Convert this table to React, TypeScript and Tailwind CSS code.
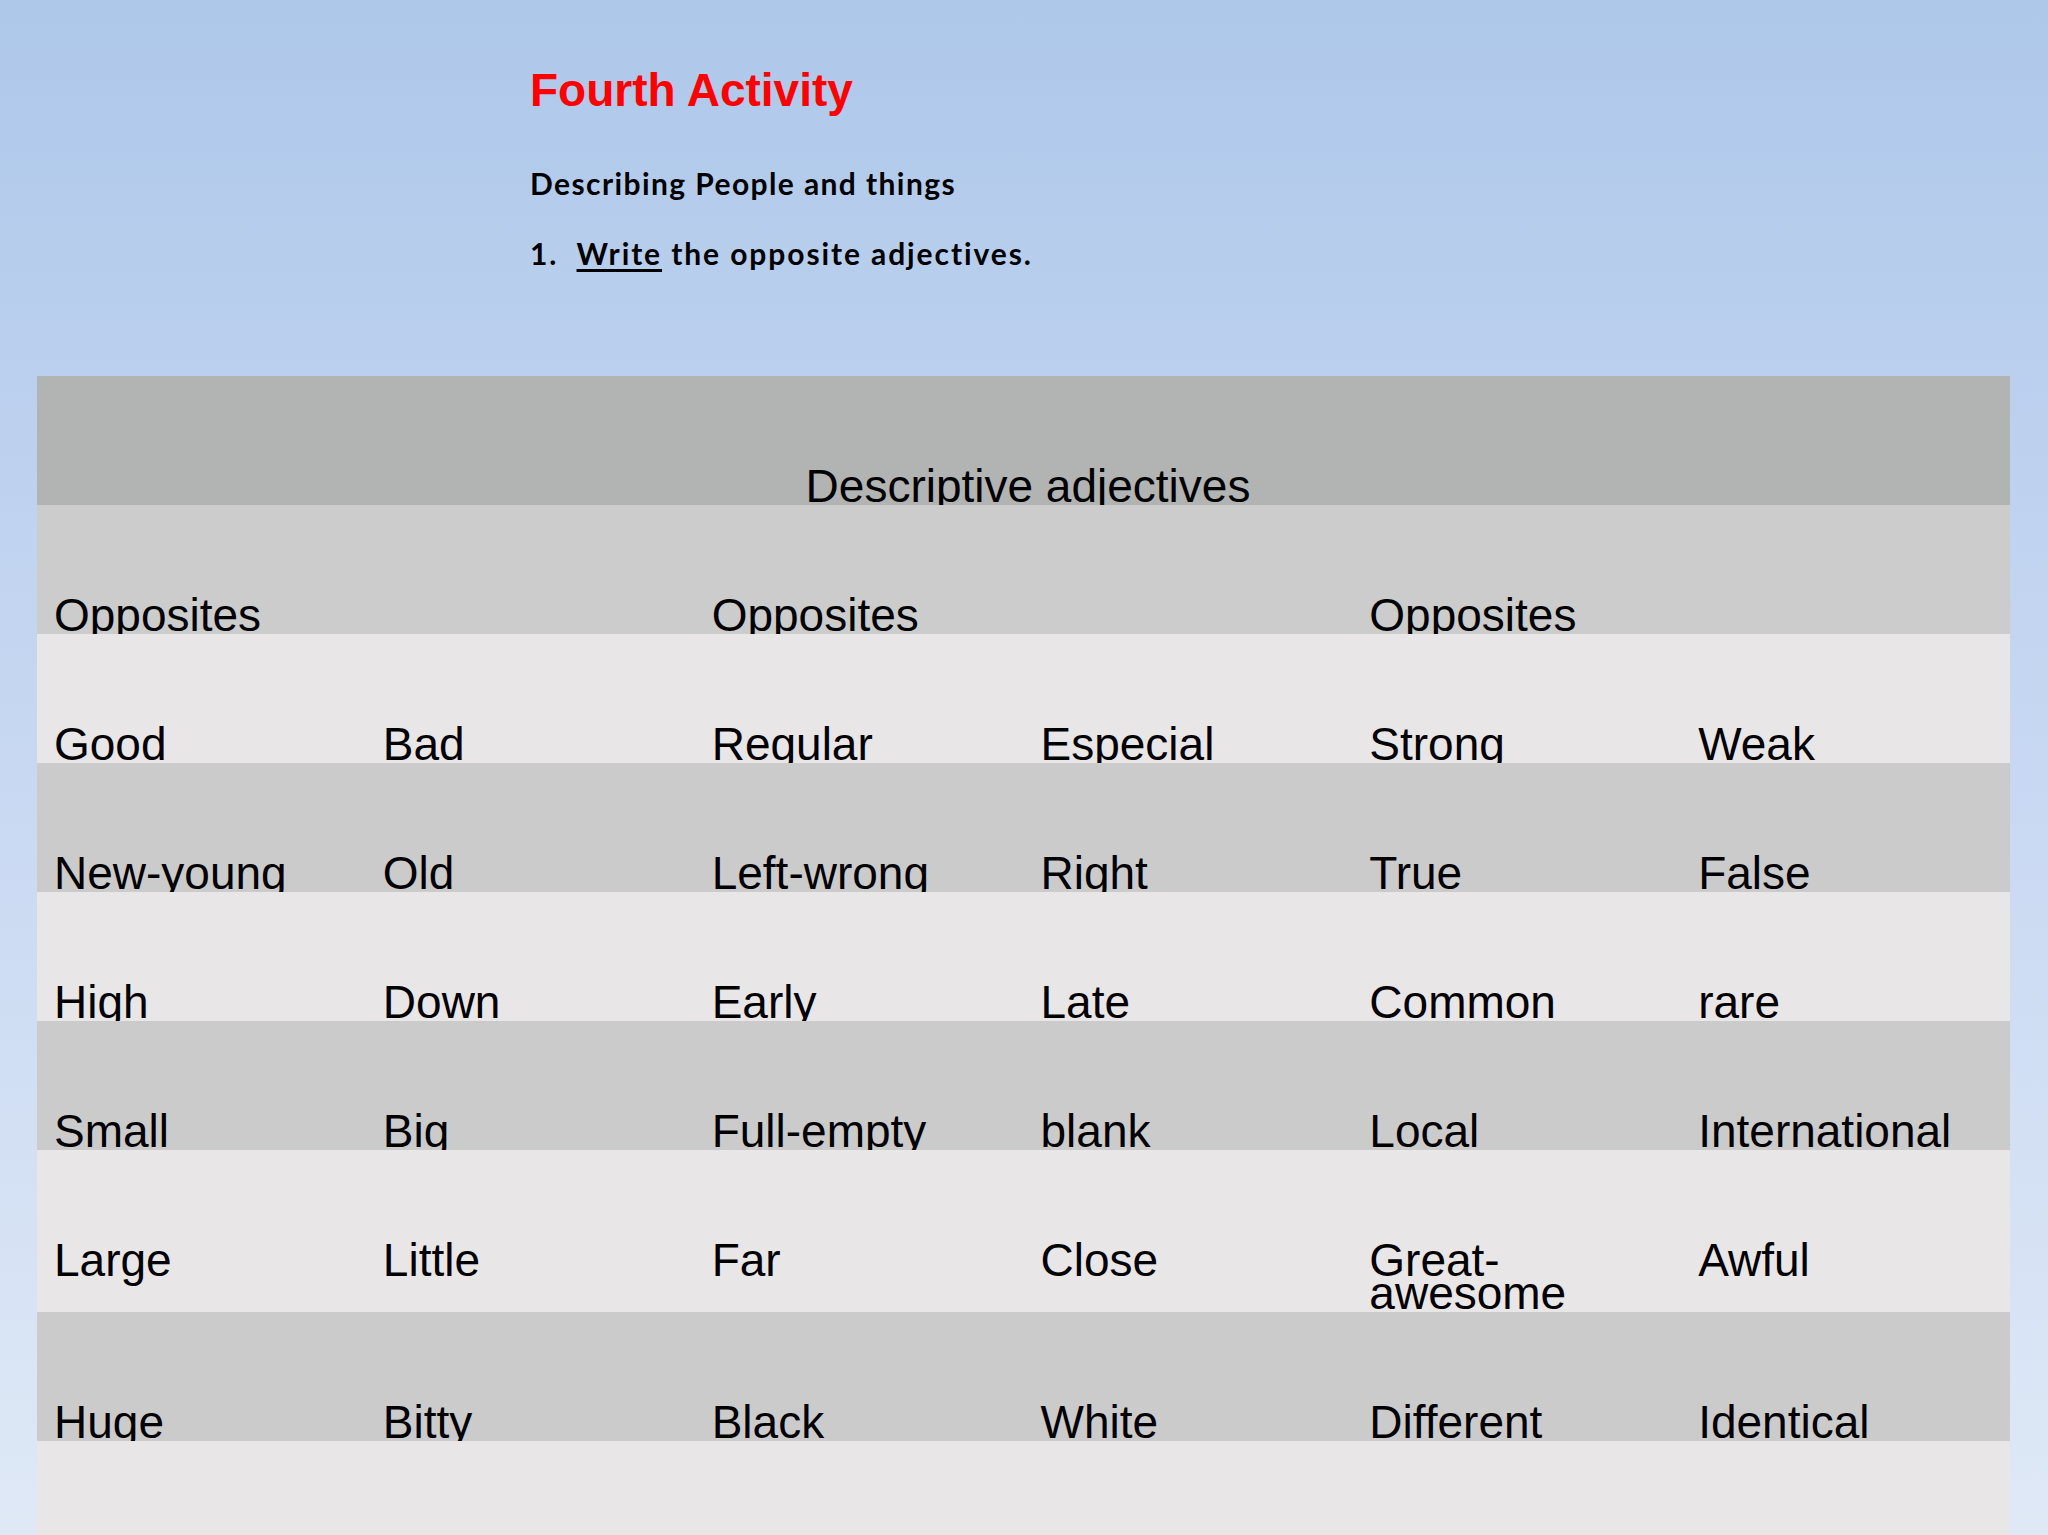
const rows: { words: string[]; tone: "light" | "dark" }[] = [
  { words: ["Good", "Bad", "Regular", "Especial", "Strong", "Weak"], tone: "light" },
  { words: ["New-young", "Old", "Left-wrong", "Right", "True", "False"], tone: "dark" },
  { words: ["High", "Down", "Early", "Late", "Common", "rare"], tone: "light" },
  { words: ["Small", "Big", "Full-empty", "blank", "Local", "International"], tone: "dark" },
  { words: ["Large", "Little", "Far", "Close", "Great-awesome", "Awful"], tone: "light" },
  { words: ["Huge", "Bitty", "Black", "White", "Different", "Identical"], tone: "dark" },
];

const cell = "pt-[94px] pb-[2px] pl-[17px] pr-[8px] text-[46px] leading-[33px] text-black";

export default function App() {
  return (
    <div
      className="flex h-[1535px] w-[2048px] flex-col overflow-hidden bg-gradient-to-b from-[#aec8ea] via-[#c8d8f2] to-[#dfe9f6]"
      style={{ fontFamily: '"Liberation Sans", Arial, sans-serif' }}
    >
      <div className="flex flex-col pl-[530px]">
        <h1 className="mt-[67px] text-[46px] font-bold leading-[46px] text-[#ff0000]">
          Fourth Activity
        </h1>
        <p
          className="mt-[55px] text-[30px] font-bold leading-[30px] tracking-[1.4px] text-black"
          style={{ fontFamily: 'Lato, "Open Sans", sans-serif' }}
        >
          Describing People and things
        </p>
        <p
          className="mt-[40px] text-[30px] font-bold leading-[30px] tracking-[1.9px] text-black"
          style={{ fontFamily: 'Lato, "Open Sans", sans-serif' }}
        >
          1.&nbsp;&nbsp;<span className="underline underline-offset-4">Write</span> the opposite adjectives.
        </p>
      </div>

      <div className="ml-[37px] mt-[108px] flex w-[1973px] flex-col">
        <div className="overflow-hidden bg-[#b2b4b3]">
          <div className={`${cell} text-center`}>Descriptive adjectives</div>
        </div>
        <div className="grid grid-cols-3 overflow-hidden bg-[#cbcccb]">
          <div className={cell}>Opposites</div>
          <div className={cell}>Opposites</div>
          <div className={cell}>Opposites</div>
        </div>
        {rows.map((row, i) => (
          <div
            key={i}
            className={`grid grid-cols-6 overflow-hidden ${row.tone === "light" ? "bg-[#e8e6e7]" : "bg-[#cccbcc]"}`}
          >
            {row.words.map((w) => (
              <div key={w} className={cell}>
                {w}
              </div>
            ))}
          </div>
        ))}
        <div className="h-[160px] bg-[#e8e6e7]" />
      </div>
    </div>
  );
}
